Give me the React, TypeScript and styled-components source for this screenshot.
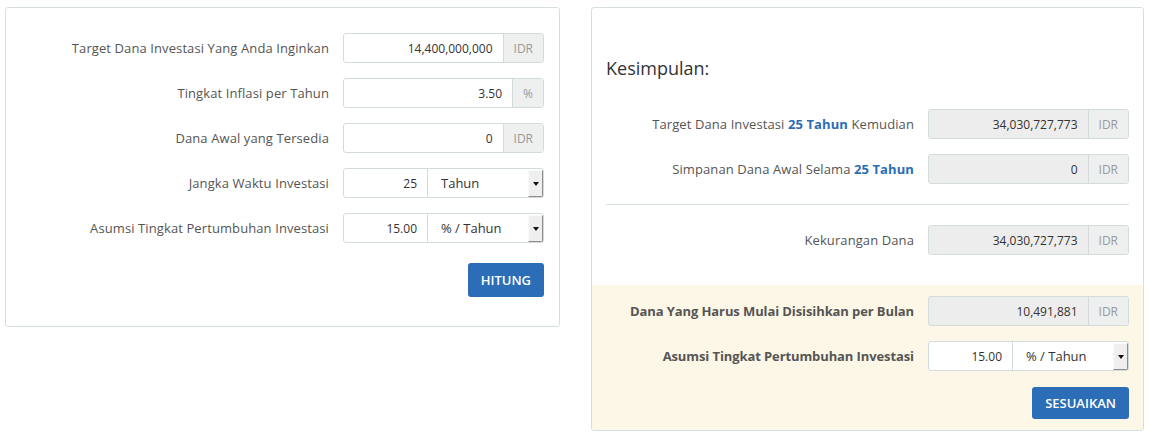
import React from 'react'
import styled, { createGlobalStyle } from 'styled-components'

const GlobalStyle = createGlobalStyle`
  body {
    margin: 0;
    background: #fff;
    font-family: "Open Sans", "Liberation Sans", sans-serif;
    color: #555;
  }
`

const Page = styled.div`
  display: flex;
  align-items: flex-start;
  gap: 31px;
  padding: 7px 0 0 5px;
`

const Panel = styled.section<{ $width: number }>`
  width: ${(p) => p.$width}px;
  box-sizing: border-box;
  border: 1px solid #d5dfdf;
  border-radius: 3px;
  background: #fff;
  overflow: hidden;
`

const LeftBody = styled.div`
  padding: 25px 15px 29px 15px;
`

const TopBody = styled.div`
  padding: 50px 14px 30px;
`

const Highlight = styled.div`
  background: #fdf7e7;
  padding: 11px 14px;
`

const Heading = styled.h3`
  margin: 0 0 31px;
  font-size: 18px;
  line-height: 20px;
  font-weight: 400;
  color: #333;
`

const Form = styled.div`
  display: grid;
  grid-template-columns: 1fr 201px;
  column-gap: 14px;
  row-gap: 15px;
  align-items: center;
`

const Label = styled.label<{ $bold?: boolean }>`
  text-align: right;
  font-size: 13px;
  letter-spacing: ${(p) => (p.$bold ? '-0.1px' : '0.1px')};
  white-space: nowrap;
  font-weight: ${(p) => (p.$bold ? 700 : 400)};
  color: #555;
`

const Accent = styled.b`
  color: #2a6db8;
  font-weight: 700;
`

const Divider = styled.hr`
  border: 0;
  border-top: 1px solid #d5dfdf;
  margin: 20px 0;
`

const Group = styled.div<{ $readOnly?: boolean }>`
  display: flex;
  height: 30px;
  box-sizing: border-box;
  border: 1px solid #d3dcdc;
  border-radius: 3px;
  overflow: hidden;
  background: ${(p) => (p.$readOnly ? '#ededed' : '#fff')};
`

const NumberField = styled.input<{ $width?: number }>`
  ${(p) => (p.$width ? `width: ${p.$width}px; flex: none;` : 'flex: 1; width: 0;')}
  box-sizing: border-box;
  border: 0;
  background: transparent;
  padding: 0 10px;
  text-align: right;
  font-family: inherit;
  font-size: 12px;
  color: #333;
  outline: none;
`

const Addon = styled.span`
  display: flex;
  align-items: center;
  padding: 0 10px;
  background: #eef0f0;
  border-left: 1px solid #d3dcdc;
  font-size: 12px;
  color: #999;
`

const SelectBox = styled.div`
  flex: 1;
  display: flex;
  border-left: 1px solid #d3dcdc;
`

const SelectText = styled.span`
  flex: 1;
  display: flex;
  align-items: center;
  padding-left: 13px;
  font-size: 13px;
  color: #333;
`

const SelectArrow = styled.span`
  width: 15px;
  margin: 1px 0 0;
  box-sizing: border-box;
  display: flex;
  align-items: center;
  justify-content: center;
  background: #efefef;
  border: 1px solid;
  border-color: #fafafa #8d8d8d #8d8d8d #fafafa;

  &::after {
    content: '';
    border-left: 3px solid transparent;
    border-right: 3px solid transparent;
    border-top: 4px solid #111;
  }
`

const Actions = styled.div<{ $offset: number }>`
  display: flex;
  justify-content: flex-end;
  margin-top: ${(p) => p.$offset}px;
`

const Button = styled.button<{ $height: number }>`
  height: ${(p) => p.$height}px;
  padding: 0 13px;
  border: 0;
  border-radius: 3px;
  background: #2b6db7;
  color: #fff;
  font-family: inherit;
  font-size: 13px;
  font-weight: 600;
  cursor: pointer;
`

type AmountProps = { value: string; unit: string; readOnly?: boolean }

const Amount = ({ value, unit, readOnly }: AmountProps) => (
  <Group $readOnly={readOnly}>
    <NumberField defaultValue={value} readOnly={readOnly} />
    <Addon>{unit}</Addon>
  </Group>
)

type PeriodProps = { value: string; option: string }

const Period = ({ value, option }: PeriodProps) => (
  <Group>
    <NumberField $width={83} defaultValue={value} />
    <SelectBox>
      <SelectText>{option}</SelectText>
      <SelectArrow />
    </SelectBox>
  </Group>
)

export default function App() {
  return (
    <>
      <GlobalStyle />
      <Page>
        <Panel $width={555}>
          <LeftBody>
            <Form>
              <Label>Target Dana Investasi Yang Anda Inginkan</Label>
              <Amount value="14,400,000,000" unit="IDR" />
              <Label>Tingkat Inflasi per Tahun</Label>
              <Amount value="3.50" unit="%" />
              <Label>Dana Awal yang Tersedia</Label>
              <Amount value="0" unit="IDR" />
              <Label>Jangka Waktu Investasi</Label>
              <Period value="25" option="Tahun" />
              <Label>Asumsi Tingkat Pertumbuhan Investasi</Label>
              <Period value="15.00" option="% / Tahun" />
            </Form>
            <Actions $offset={20}>
              <Button $height={34}>HITUNG</Button>
            </Actions>
          </LeftBody>
        </Panel>

        <Panel $width={553}>
          <TopBody>
            <Heading>Kesimpulan:</Heading>
            <Form>
              <Label>
                Target Dana Investasi <Accent>25 Tahun</Accent> Kemudian
              </Label>
              <Amount value="34,030,727,773" unit="IDR" readOnly />
              <Label>
                Simpanan Dana Awal Selama <Accent>25 Tahun</Accent>
              </Label>
              <Amount value="0" unit="IDR" readOnly />
            </Form>
            <Divider />
            <Form>
              <Label>Kekurangan Dana</Label>
              <Amount value="34,030,727,773" unit="IDR" readOnly />
            </Form>
          </TopBody>
          <Highlight>
            <Form>
              <Label $bold>Dana Yang Harus Mulai Disisihkan per Bulan</Label>
              <Amount value="10,491,881" unit="IDR" readOnly />
              <Label $bold>Asumsi Tingkat Pertumbuhan Investasi</Label>
              <Period value="15.00" option="% / Tahun" />
            </Form>
            <Actions $offset={16}>
              <Button $height={32}>SESUAIKAN</Button>
            </Actions>
          </Highlight>
        </Panel>
      </Page>
    </>
  )
}
